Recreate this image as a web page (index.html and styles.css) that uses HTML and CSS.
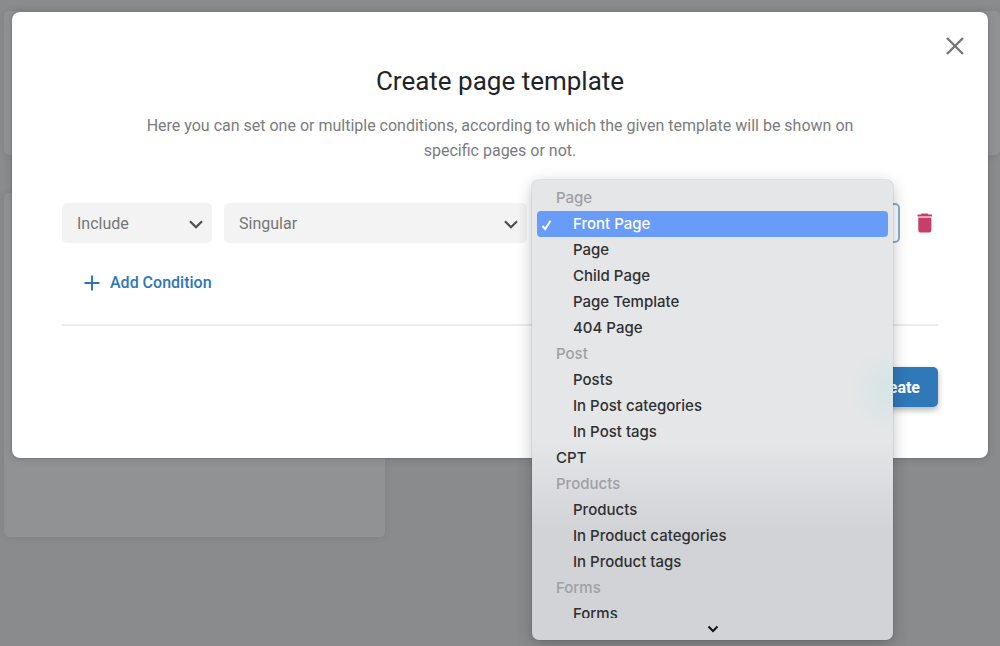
FILE: index.html
```html
<!DOCTYPE html>
<html lang="en">
<head>
<meta charset="utf-8">
<meta name="viewport" content="width=device-width, initial-scale=1">
<title>Create page template</title>
<link rel="stylesheet" href="styles.css">
</head>
<body>
<div class="page" aria-hidden="true">
  <div class="card card-wide"></div>
  <div class="card card-tall"></div>
</div>
<div class="overlay">
  <section class="modal" role="dialog" aria-modal="true" aria-labelledby="modal-title">
    <button class="close" type="button" aria-label="Close">
      <svg width="20" height="20" viewBox="0 0 20 20"><path d="M2 2L18 18M18 2L2 18"/></svg>
    </button>
    <h1 class="title" id="modal-title">Create page template</h1>
    <p class="description">Here you can set one or multiple conditions, according to which the given template will be shown on specific pages or not.</p>
    <form class="form">
      <div class="condition">
        <div class="field">
          <select class="select" aria-label="Condition type"><option>Include</option><option>Exclude</option></select>
          <svg class="chevron" width="14" height="9" viewBox="0 0 14 9"><path d="M1 1.200L7 7.200L13 1.200"/></svg>
        </div>
        <div class="field">
          <select class="select" aria-label="Condition scope"><option>Singular</option></select>
          <svg class="chevron" width="14" height="9" viewBox="0 0 14 9"><path d="M1 1.200L7 7.200L13 1.200"/></svg>
        </div>
        <div class="field">
          <select class="select select-open" aria-label="Page"><option>Front Page</option></select>
          <div class="menu">
            <ul class="menu-list" role="listbox" aria-label="Page">
              <li class="group" role="presentation">Page</li>
              <li class="option selected" role="option" aria-selected="true"><svg class="check" width="11" height="12" viewBox="0 0 11 12"><path d="M1.500 7L4.200 10L9.500 1.800"/></svg>Front Page</li>
              <li class="option" role="option">Page</li>
              <li class="option" role="option">Child Page</li>
              <li class="option" role="option">Page Template</li>
              <li class="option" role="option">404 Page</li>
              <li class="group" role="presentation">Post</li>
              <li class="option" role="option">Posts</li>
              <li class="option" role="option">In Post categories</li>
              <li class="option" role="option">In Post tags</li>
              <li class="option top-level" role="option">CPT</li>
              <li class="group" role="presentation">Products</li>
              <li class="option" role="option">Products</li>
              <li class="option" role="option">In Product categories</li>
              <li class="option" role="option">In Product tags</li>
              <li class="group" role="presentation">Forms</li>
              <li class="option" role="option">Forms</li>
            </ul>
            <div class="menu-more"><svg width="12" height="8" viewBox="0 0 12 8"><path d="M1.500 1.500L6 6L10.500 1.500"/></svg></div>
          </div>
        </div>
        <button class="remove" type="button" aria-label="Remove condition">
          <svg width="16" height="20" viewBox="0 0 16 20"><path d="M4.500 0.500h6l1 1H15v2H.500v-2h3.500z"/><path class="bin-gap" d="M1.300 3.500h13v1.500h-13z"/><path d="M1.300 5h13v12.500q0 2-2 2h-9q-2 0-2-2z"/></svg>
        </button>
      </div>
      <button class="add" type="button">
        <svg width="16" height="16" viewBox="0 0 16 16"><path d="M8 .500V15.500M.500 8H15.500"/></svg>
        Add Condition
      </button>
      <div class="actions">
        <button class="create" type="submit">Create</button>
      </div>
    </form>
  </section>
</div>
</body>
</html>
```
FILE: styles.css
```css
* {
  box-sizing: border-box;
}

body {
  margin: 0;
  min-height: 100vh;
  background: #8a8b8d;
  font-family: Roboto, "Liberation Sans", sans-serif;
}

button,
select {
  font: inherit;
}

button {
  border: 0;
  padding: 0;
  background: none;
  cursor: pointer;
}

svg {
  display: block;
  fill: none;
}

.page {
  display: grid;
  gap: 38px;
  padding: 11px 0 0 4px;
}

.card {
  border-radius: 5px;
  background: #919294;
  box-shadow: 0 1px 6px rgba(60, 62, 70, 0.12);
}

.card-wide {
  height: 144px;
}

.card-tall {
  width: 381px;
  height: 344px;
}

.overlay {
  position: absolute;
  inset: 0;
  padding: 12px;
}

.modal {
  position: relative;
  padding: 51px 50px;
  border-radius: 8px;
  background: #fff;
  box-shadow: 0 0 2px rgba(40, 42, 48, 0.4), 0 1px 8px rgba(40, 42, 48, 0.16);
}

.close {
  position: absolute;
  top: 24px;
  right: 23px;
}

.close path {
  stroke: #75777a;
  stroke-width: 2.4;
}

.title {
  margin: 0;
  color: #21252b;
  font-size: 26px;
  font-weight: 400;
  line-height: 36px;
  text-align: center;
}

.description {
  max-width: 740px;
  margin: 14px auto 0;
  color: #7a7c7f;
  font-size: 16px;
  line-height: 25px;
  text-align: center;
}

.form {
  margin-top: 40px;
}

.condition {
  display: grid;
  grid-template-columns: 150px 303fr 361fr 26px;
  gap: 12px;
}

.field {
  position: relative;
}

.select {
  display: block;
  width: 100%;
  height: 40px;
  padding: 0 15px;
  border: 0;
  border-radius: 5px;
  outline: 0;
  appearance: none;
  background: #f3f3f3;
  color: #737577;
  font-size: 16px;
}

.select-open {
  border: 2px solid #7fb2d0;
  background: #fff;
}

.chevron {
  position: absolute;
  top: 17px;
  right: 9px;
  pointer-events: none;
}

.chevron path {
  stroke: #4c4d50;
  stroke-width: 2.2;
}

.remove {
  display: flex;
  align-items: center;
  justify-content: center;
}

.remove path {
  fill: #c73e69;
}

.remove .bin-gap {
  fill: #e7aabd;
}

.add {
  display: flex;
  align-items: center;
  gap: 10px;
  margin: 29px 0 0 22px;
  color: #2d77b9;
  font-size: 16px;
  font-weight: 500;
  line-height: 22px;
}

.add path {
  stroke: #2d77b9;
  stroke-width: 2;
}

.actions {
  display: flex;
  justify-content: flex-end;
  margin-top: 30px;
  padding-top: 41px;
  border-top: 2px solid #ececec;
}

.create {
  height: 40px;
  padding: 0 18px;
  border-radius: 5px;
  background: #3079b9;
  box-shadow: 0 3px 6px rgba(0, 0, 0, 0.3);
  color: #fff;
  font-size: 16px;
  font-weight: 700;
}

.menu {
  position: absolute;
  z-index: 1;
  top: -23px;
  right: 7px;
  left: -7px;
  padding: 5px;
  border-radius: 7px;
  background:
    radial-gradient(circle at 360px 210px, rgba(195, 228, 225, 0.5), rgba(195, 228, 225, 0) 44px),
    linear-gradient(#e5e6e8 260px, #d2d3d7 350px);
  box-shadow: 0 0 1px rgba(0, 0, 0, 0.6), 0 4px 16px rgba(0, 0, 0, 0.24);
  font-family: Inter, "Liberation Sans", sans-serif;
}

.menu-list {
  height: 433px;
  margin: 0;
  padding: 0;
  overflow: hidden;
  list-style: none;
}

.group,
.option {
  position: relative;
  height: 26px;
  padding-left: 19px;
  color: #9fa0a3;
  font-size: 15px;
  font-weight: 500;
  line-height: 26px;
}

.option {
  padding-left: 36px;
  color: #2f3032;
}

.top-level {
  padding-left: 19px;
}

.option.selected {
  border-radius: 4px;
  background: #689cf8;
  color: #fff;
}

.check {
  position: absolute;
  top: 8px;
  left: 4px;
}

.check path {
  stroke: #fff;
  stroke-width: 2;
}

.menu-more {
  display: flex;
  justify-content: center;
  padding: 7px 0 2px;
}

.menu-more path {
  stroke: #111214;
  stroke-width: 2;
}
```
